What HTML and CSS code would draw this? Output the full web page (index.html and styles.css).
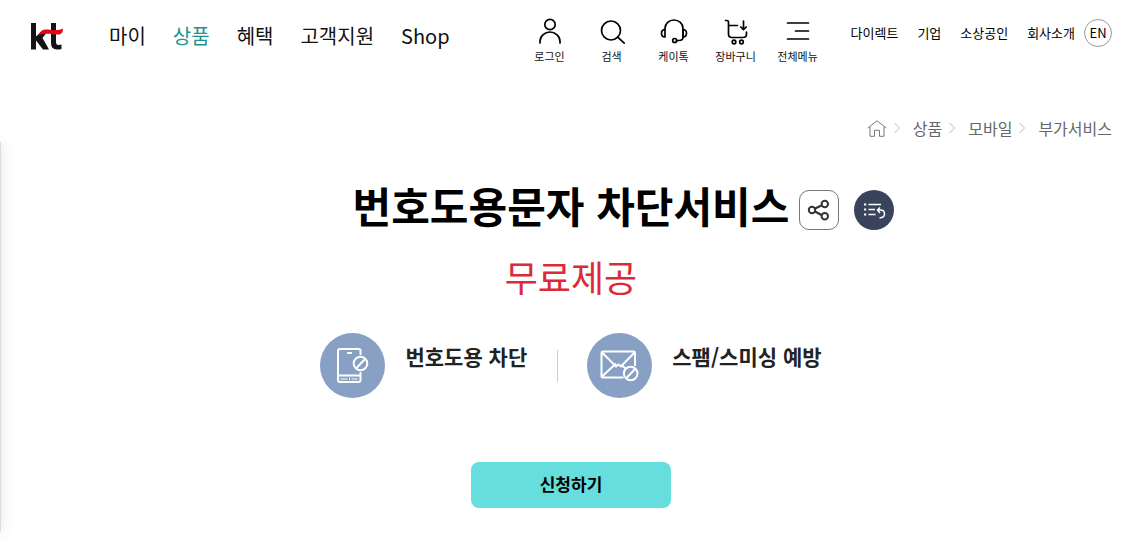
FILE: index.html
```
<!DOCTYPE html>
<html lang="ko">
<head>
    <meta charset="UTF-8">
    <meta name="viewport" content="width=device-width, initial-scale=1.0">
    <title>번호도용문자 차단서비스 | kt</title>
    <link rel="stylesheet" href="styles.css">
</head>
<body>
    <header class="header">
        <a href="#" class="logo" aria-label="kt">
            <svg width="32" height="27" viewBox="0 0 32 27">
                <path fill="#141414" d="M0 0h5v13.500L11 8h6L11.500 15 18 26.500h-6L5 17.500v9H0z"/>
                <path fill="#141414" d="M20 0h5v19q0 3 2.500 3 1.500 0 3-.4v4.400q-2 .6-4.500 .6-6 0-6-6.500z"/>
                <path fill="#e60019" d="M7.500 12Q10 6.500 14.500 6.500C19 6.500 27 8.500 32 5.500 32 9 30.500 11.500 27.500 11.500 22 11.500 14 9.500 7.500 12z"/>
            </svg>
        </a>
        <nav class="main-nav">
            <a href="#">마이</a>
            <a href="#" class="active">상품</a>
            <a href="#">혜택</a>
            <a href="#">고객지원</a>
            <a href="#">Shop</a>
        </nav>
        <div class="quick-menu">
            <a href="#">
                <svg width="28" height="28" viewBox="0 0 28 28">
                    <circle cx="14" cy="7.500" r="5.200"/>
                    <path d="M4 26v-1.500a10 9.500 0 0 1 20 0V26"/>
                </svg>
                <span>로그인</span>
            </a>
            <a href="#">
                <svg width="28" height="28" viewBox="0 0 28 28">
                    <circle cx="13" cy="13.500" r="9.500"/>
                    <path d="M19.700 20.200l6.500 6"/>
                </svg>
                <span>검색</span>
            </a>
            <a href="#">
                <svg width="28" height="28" viewBox="0 0 28 28">
                    <path d="M5 12v-.5a9 8.500 0 0 1 18 0v8.500q0 3.500-4 3.500h-2.500"/>
                    <path d="M5 12.500v7.500q-3.500 0-3.500-3.750t3.500-3.750zM23 12.500v7.500q3.500 0 3.500-3.750t-3.500-3.750z"/>
                    <circle cx="14.700" cy="23.500" r="2"/>
                </svg>
                <span>케이톡</span>
            </a>
            <a href="#">
                <svg width="28" height="28" viewBox="0 0 28 28">
                    <path d="M3.500 3.500h1.500q1.500 0 1.500 2v11.500q0 3.500 3.500 3.500h11q3.500 0 3.500-3.500v-2M6.500 8.500h9"/>
                    <path d="M21.500 4v8.500M18.800 10l2.700 2.700 2.700-2.700"/>
                    <circle cx="12" cy="25" r="1.800"/>
                    <circle cx="19.500" cy="25" r="1.800"/>
                </svg>
                <span>장바구니</span>
            </a>
            <a href="#">
                <svg width="28" height="28" viewBox="0 0 28 28">
                    <path d="M3.500 6h21M11.500 14h13M3.500 22h21"/>
                </svg>
                <span>전체메뉴</span>
            </a>
        </div>
        <div class="site-links">
            <a href="#">다이렉트</a>
            <a href="#">기업</a>
            <a href="#">소상공인</a>
            <a href="#">회사소개</a>
        </div>
        <a href="#" class="lang">EN</a>
    </header>

    <!-- Side panel, closed: only its edge shows -->
    <aside class="side-panel"></aside>

    <nav class="breadcrumb">
        <a href="#" aria-label="홈">
            <svg width="20" height="17" viewBox="0 0 20 17">
                <path d="M.7 8L10 .8 19.300 8M3 7v9.300h4.500v-6h5v6H17V7"/>
            </svg>
        </a>
        <svg class="arrow" width="8" height="12" viewBox="0 0 8 12"><path d="M1.500 1l5 5-5 5"/></svg>
        <a href="#">상품</a>
        <svg class="arrow" width="8" height="12" viewBox="0 0 8 12"><path d="M1.500 1l5 5-5 5"/></svg>
        <a href="#">모바일</a>
        <svg class="arrow" width="8" height="12" viewBox="0 0 8 12"><path d="M1.500 1l5 5-5 5"/></svg>
        <a href="#">부가서비스</a>
    </nav>

    <main class="product">
        <div class="title-row">
            <h1>번호도용문자 차단서비스</h1>
            <button type="button" class="share" aria-label="공유하기">
                <svg width="24" height="24" viewBox="0 0 24 24">
                    <path d="M8 10.500l6.500-3M8 13.500l6.500 3.500"/>
                    <circle cx="5" cy="12" r="3.200"/>
                    <circle cx="17.800" cy="6" r="3.200"/>
                    <circle cx="17.800" cy="18.300" r="3.200"/>
                </svg>
            </button>
            <button type="button" class="list-back" aria-label="목록으로">
                <svg width="24" height="24" viewBox="0 0 24 24">
                    <path d="M6.500 6.500h12.500M6.500 11.500h6.500M6.500 16.500h7"/>
                    <path d="M2 6.500h2.200M2 11.500h2.200M2 16.500h2.200" stroke-width="2.200"/>
                    <path d="M18 9.500l-2.500 2.500 2.500 3M15.500 12h3q4 0 4 4t-5 3.800"/>
                </svg>
            </button>
        </div>
        <p class="price">무료제공</p>
        <ul class="features">
            <li>
                <svg width="65" height="65" viewBox="0 0 65 65">
                    <circle cx="32.500" cy="32.500" r="32.500" fill="#87a0c4"/>
                    <g fill="none" stroke="#fff" stroke-width="2">
                        <path d="M40.500 22v-4q0-2-2-2h-18.500q-2 0-2 2v29q0 2 2 2h18.500q2 0 2-2V39M18 42.500h22.500M27 20h5"/>
                        <path d="M20.500 46h7M31.500 46h6M29.500 44.500v2.500" stroke-width="1"/>
                        <circle cx="40.500" cy="30.500" r="6.800"/>
                        <path d="M36.500 35l8.500-9"/>
                    </g>
                </svg>
                <strong>번호도용 차단</strong>
            </li>
            <li>
                <svg width="65" height="65" viewBox="0 0 65 65">
                    <circle cx="32.500" cy="32.500" r="32.500" fill="#87a0c4"/>
                    <g fill="none" stroke="#fff" stroke-width="2">
                        <path d="M36.500 44.500H16q-1.500 0-1.500-1.500V20q0-1.500 1.500-1.500h30.500q1.500 0 1.500 1.500v13M15 19.500l14 14 2.500-2 2.500 2 13.500-14M15 43.500l14-13M34 31.500l4.500 4"/>
                        <circle cx="43.700" cy="40.500" r="6.800"/>
                        <path d="M39.500 45l8.500-9"/>
                    </g>
                </svg>
                <strong>스팸/스미싱 예방</strong>
            </li>
        </ul>
        <button type="button" class="apply">신청하기</button>
    </main>
</body>
</html>
```
FILE: styles.css
```
* {
    margin: 0;
    padding: 0;
    box-sizing: border-box;
}

body {
    font-family: "Noto Sans CJK KR", "Noto Sans", sans-serif;
    background-color: #fff;
    color: #111;
    overflow-x: hidden;
}

a {
    color: inherit;
    text-decoration: none;
}

svg {
    display: block;
    flex-shrink: 0;
}

/* Header */
.header {
    display: flex;
    align-items: flex-start;
    padding: 17px 26px 0 31px;
    white-space: nowrap;
}

.logo {
    padding-top: 6px;
}

.main-nav {
    display: flex;
    gap: 27px;
    margin-left: 46px;
    font-size: 20px;
    line-height: 38px;
}

.main-nav .active {
    color: #1a9490;
}

.quick-menu {
    display: flex;
    margin-left: auto;
}

.quick-menu a {
    display: flex;
    flex-direction: column;
    align-items: center;
    width: 62px;
    font-size: 11px;
    line-height: 16px;
    gap: 3px;
}

.quick-menu svg {
    fill: none;
    stroke: #000;
    stroke-width: 1.7;
    stroke-linecap: round;
    stroke-linejoin: round;
}

.site-links {
    display: flex;
    gap: 19px;
    margin-left: 22px;
    font-size: 13px;
    line-height: 32px;
    color: #000;
}

.lang {
    width: 28px;
    height: 28px;
    margin: 2px 0 0 9px;
    border: 1px solid #999;
    border-radius: 50%;
    font-size: 13px;
    line-height: 26px;
    text-align: center;
    color: #000;
}

.side-panel {
    position: absolute;
    top: 142px;
    bottom: 16px;
    left: -99px;
    width: 100px;
    border: 1px solid #ddd;
    background-color: #fff;
    box-shadow: 0 0 15px rgba(0, 0, 0, 0.1);
}

/* Breadcrumb */
.breadcrumb {
    display: flex;
    justify-content: flex-end;
    align-items: center;
    margin-top: 51px;
    padding-right: 26px;
    font-size: 16px;
    line-height: 26px;
    color: #666;
}

.breadcrumb svg {
    fill: none;
    stroke: #777;
}

.breadcrumb .arrow {
    margin: 0 12px 0 6px;
    stroke: #bbb;
}

/* Product */
.product {
    display: flex;
    flex-direction: column;
    align-items: center;
    padding: 32px 0 40px 4px;
}

.title-row {
    display: flex;
    align-items: flex-start;
    padding-left: 105px;
}

.title-row h1 {
    font-size: 42px;
    font-weight: 700;
    line-height: 64px;
    color: #000;
}

.title-row button {
    display: flex;
    align-items: center;
    justify-content: center;
    width: 40px;
    height: 40px;
    margin-top: 17px;
    cursor: pointer;
}

.title-row svg {
    fill: none;
    stroke-width: 2;
}

.title-row .share {
    margin-left: 10px;
    border: 1px solid #777;
    border-radius: 10px;
    background-color: #fff;
}

.share svg {
    stroke: #333;
}

.title-row .list-back {
    margin-left: 15px;
    border: none;
    border-radius: 50%;
    background-color: #39435c;
}

.title-row .list-back svg {
    stroke: #fff;
    stroke-width: 1.5;
}

.price {
    margin-top: 12px;
    font-size: 36px;
    line-height: 54px;
    color: #db2b39;
}

.features {
    display: flex;
    margin-top: 30px;
    list-style: none;
}

.features li {
    display: flex;
    align-items: flex-start;
    gap: 20px;
}

.features li + li::before {
    content: "";
    width: 1px;
    height: 32px;
    margin: 17px 9px 0 10px;
    background-color: #ccc;
}

.features li + li {
    margin-left: 20px;
}

.features strong {
    font-size: 21px;
    font-weight: 700;
    line-height: 46px;
    color: #222;
}

.apply {
    width: 200px;
    height: 46px;
    margin-top: 64px;
    padding-bottom: 3px;
    border: none;
    border-radius: 8px;
    background-color: #66dedd;
    color: #000;
    font-family: inherit;
    font-size: 17px;
    font-weight: 700;
    cursor: pointer;
}
```
